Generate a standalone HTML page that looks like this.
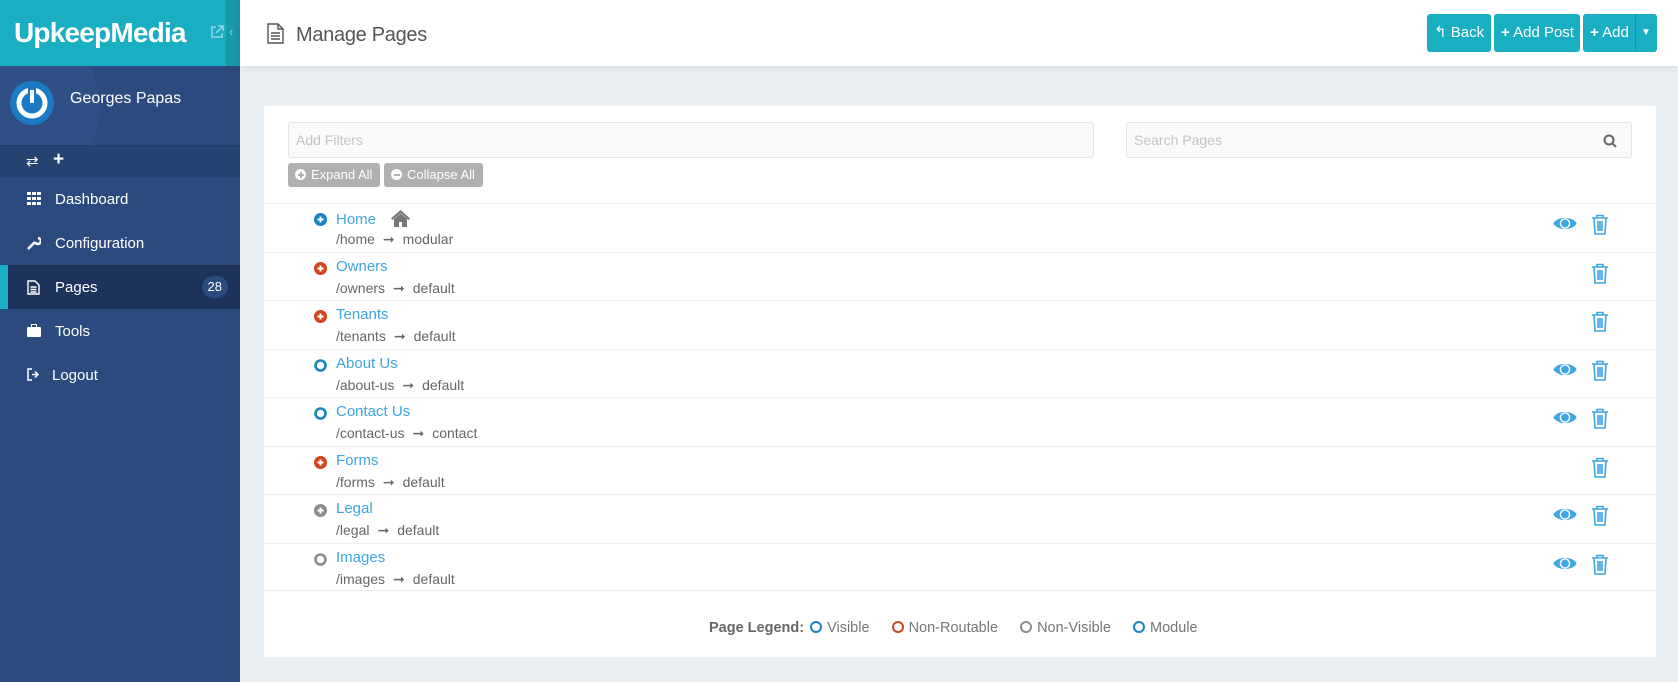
<!DOCTYPE html>
<html><head><meta charset="utf-8"><style>
*{box-sizing:border-box;margin:0;padding:0}
body{width:1678px;height:682px;overflow:hidden;background:#eaeff3;font-family:"Liberation Sans",Arial,sans-serif;position:relative}
.sb{position:absolute;left:0;top:0;width:240px;height:682px;background:#2c4a7e}
.logo{position:absolute;left:0;top:0;width:240px;height:66px;background:#1aaec2}
.logo .strip{position:absolute;right:0;top:0;width:14px;height:66px;background:#1798ab}
.logo b{position:absolute;left:14px;top:17px;color:#fff;font-size:28px;letter-spacing:-0.8px}
.prof{position:absolute;top:66px;left:0;width:240px;height:80px;overflow:hidden;border-bottom:1px solid #24406e}
.prof .halo{position:absolute;left:-60px;top:-40px;width:160px;height:160px;border-radius:50%;background:#2f4f85}
.av{position:absolute;left:10px;top:15px;width:44px;height:44px;border-radius:50%;background:#1a7ac4}
.prof .nm{position:absolute;left:70px;top:24px;color:#fff;font-size:16px}
.tb{position:absolute;top:146px;left:0;width:240px;height:31px;background:#264372;color:#fff}
.mi{position:absolute;left:0;width:240px;height:44px;color:#fff;font-size:15px;line-height:46px;padding-left:55px}
.mi.act{background:#1d335c;border-left:8px solid #1aaec2;padding-left:47px}
.mi svg{position:absolute;left:27px;top:15px}
.mi.act svg{left:19px}
.badge{position:absolute;right:12px;top:11px;background:#2c4a7e;border-radius:11px;font-size:13px;line-height:22px;padding:0 6px}
.hd{position:absolute;left:240px;top:0;width:1438px;height:66px;background:#fff;box-shadow:0 2px 8px rgba(0,0,0,.08)}
.hd h1{position:absolute;left:56px;top:24px;font-weight:normal;font-size:20px;color:#555;letter-spacing:-0.3px}
.btn{position:absolute;top:14px;height:38px;background:#1aaec2;border-radius:3px;color:#fff;font-size:15px;line-height:38px;padding-left:7px}
.panel{position:absolute;left:264px;top:106px;width:1392px;height:551px;background:#fff}
.inp{position:absolute;top:16px;height:36px;border:1px solid #e4e4e4;border-radius:3px;background:#fafafa;color:#c4c4c4;font-size:14px;line-height:34px;padding-left:7px}
.gb{position:absolute;top:57px;height:24px;background:#b0b0b0;border-radius:3px;color:#fff;font-size:13px;line-height:24px;padding-left:7px}
.gb i{display:inline-block;width:11px;height:11px;border-radius:50%;background:#fff;vertical-align:-1px;margin-right:5px;position:relative}
.gb i:after{content:"";position:absolute;left:2.5px;top:4.5px;width:6px;height:2px;background:#b0b0b0}
.gb i.p:before{content:"";position:absolute;left:4.5px;top:2.5px;width:2px;height:6px;background:#b0b0b0}
.row{position:absolute;left:0;width:1392px;height:48.5px;border-top:1px solid #eceef0}
.row .t{position:absolute;left:72px;top:5px;color:#3ea6e2;font-size:15px}
.row .s{position:absolute;left:72px;top:27px;color:#666;font-size:14px;word-spacing:0}
.row .s i{font-style:normal;margin:0 8px}
.row .ic{position:absolute;left:50px;top:9px}
.eye{position:absolute;left:1288px;top:11px}
.tr{position:absolute;left:1327px;top:10px}
.leg{position:absolute;top:514px;left:445px;font-size:14.5px;color:#777}
.leg b{color:#666}
.leg span{display:inline-block;width:12px;height:12px;border-radius:50%;border:2.5px solid;vertical-align:-1px;margin:0 5px 0 8px}
</style></head><body>
<div class="sb">
 <div class="logo"><b>UpkeepMedia</b><div class="strip"></div>
  <svg style="position:absolute;left:210px;top:25px" width="14" height="14" viewBox="0 0 14 14" fill="none" stroke="#8fdbe6" stroke-width="1.5"><path d="M6 2H2v10h10V8M8 1h5v5M13 1L6 8"/></svg>
  <span style="position:absolute;left:229px;top:24px;color:#8fdbe6;font-size:13px">‹</span></div>
 <div class="prof"><div class="halo"></div><div class="av">
  <svg width="44" height="44" viewBox="0 0 44 44"><circle cx="22" cy="22" r="13" fill="none" stroke="#fff" stroke-width="5"/><rect x="18" y="6" width="8" height="17" fill="#1a7ac4"/><rect x="20" y="9" width="4" height="13" fill="#fff"/></svg></div>
  <div class="nm">Georges Papas</div></div>
 <div class="tb"><span style="position:absolute;left:26px;top:6px;font-size:15px">⇄</span><span style="position:absolute;left:53px;top:3px;font-size:19px;font-weight:bold">+</span></div>
 <div class="mi" style="top:177px"><svg width="14" height="13"><g fill="#fff"><rect x="0" y="0" width="4" height="3"/><rect x="5" y="0" width="4" height="3"/><rect x="10" y="0" width="4" height="3"/><rect x="0" y="5" width="4" height="3"/><rect x="5" y="5" width="4" height="3"/><rect x="10" y="5" width="4" height="3"/><rect x="0" y="10" width="4" height="3"/><rect x="5" y="10" width="4" height="3"/><rect x="10" y="10" width="4" height="3"/></g></svg>Dashboard</div>
 <div class="mi" style="top:221px"><svg width="14" height="14"><path d="M1 13l7-7M8 6a3 3 0 1 0 3-4" stroke="#fff" stroke-width="2.5" fill="none"/></svg>Configuration</div>
 <div class="mi act" style="top:265px"><svg width="13" height="15" viewBox="0 0 13 15" fill="none" stroke="#fff" stroke-width="1.4"><path d="M1 1h7l4 4v9H1z M3.5 7h6M3.5 9.5h6M3.5 12h6"/></svg>Pages<span class="badge">28</span></div>
 <div class="mi" style="top:309px"><svg width="14" height="13"><rect x="0" y="3" width="14" height="10" rx="1" fill="#fff"/><rect x="4.5" y="0.5" width="5" height="3" fill="none" stroke="#fff"/></svg>Tools</div>
 <div class="mi" style="top:353px;padding-left:52px"><svg width="14" height="13" viewBox="0 0 14 13" fill="none" stroke="#fff" stroke-width="1.5"><path d="M5 1H1v11h4"/><path d="M5 6.5h5M8 3.5l3 3-3 3" /></svg>Logout</div>
</div>
<div class="hd">
 <svg style="position:absolute;left:27px;top:23px" width="17" height="21" viewBox="0 0 17 21" fill="none" stroke="#555" stroke-width="1.4"><path d="M1 1h10l5 5v14H1z M11 1v5h5 M4 10h9M4 13h9M4 16h9"/></svg>
 <h1>Manage Pages</h1>
 <div class="btn" style="left:1187px;width:64px">↰ Back</div>
 <div class="btn" style="left:1254px;width:86px"><b>+</b> Add Post</div>
 <div class="btn" style="left:1343px;width:74px"><b>+</b> Add<span style="position:absolute;left:52px;top:0;width:1px;height:38px;background:#1593a5"></span><span style="position:absolute;left:58px;font-size:10px">▼</span></div>
</div>
<div class="panel">
 <div class="inp" style="left:24px;width:806px">Add Filters</div>
 <div class="inp" style="left:862px;width:506px">Search Pages
  <svg style="position:absolute;right:14px;top:11px" width="14" height="14" fill="none" stroke="#666" stroke-width="2"><circle cx="6" cy="6" r="4.5"/><path d="M9.5 9.5l3.5 3.5"/></svg></div>
 <div class="gb" style="left:24px;width:92px"><i class="p"></i>Expand All</div>
 <div class="gb" style="left:120px;width:99px"><i></i>Collapse All</div>

 <div class="row" style="top:97px"><svg class="ic" width="13" height="13"><circle cx="6.5" cy="6.5" r="6.5" fill="#1783c0"/><path d="M3.5 6.5h6M6.5 3.5v6" stroke="#fff" stroke-width="2"/></svg><div class="t">Home <svg style="margin-left:10px;vertical-align:-3px" width="21" height="18" viewBox="0 0 21 18"><path d="M10.5 1L1 9.5l1.5 1.5 8-7 8 7L20 9.5z M4 10v8h5v-5h3v5h5v-8l-6.5-5.5z" fill="#777"/></svg></div><div class="s">/home<i>➞</i>modular</div>
  <svg class="eye" width="26" height="17" viewBox="0 0 24 16"><path d="M1 8C5 1 19 1 23 8 19 15 5 15 1 8z" fill="#3ea6e2"/><circle cx="12" cy="8" r="5" fill="#fff"/><circle cx="12" cy="8" r="3.6" fill="#3ea6e2"/></svg>
  <svg class="tr" width="18" height="21" viewBox="0 0 18 21" fill="none" stroke="#3ea6e2" stroke-width="1.6"><path d="M1 4h16M6 4V1.5h6V4M3 4l1 16h10l1-16M7 7v10M9 7v10M11 7v10"/></svg></div>
 <div class="row" style="top:145.5px"><svg class="ic" width="13" height="13"><circle cx="6.5" cy="6.5" r="6.5" fill="#d1441f"/><path d="M3.5 6.5h6M6.5 3.5v6" stroke="#fff" stroke-width="2"/></svg><div class="t">Owners</div><div class="s">/owners<i>➞</i>default</div>
  <svg class="tr" width="18" height="21" viewBox="0 0 18 21" fill="none" stroke="#3ea6e2" stroke-width="1.6"><path d="M1 4h16M6 4V1.5h6V4M3 4l1 16h10l1-16M7 7v10M9 7v10M11 7v10"/></svg></div>
 <div class="row" style="top:194px"><svg class="ic" width="13" height="13"><circle cx="6.5" cy="6.5" r="6.5" fill="#d1441f"/><path d="M3.5 6.5h6M6.5 3.5v6" stroke="#fff" stroke-width="2"/></svg><div class="t">Tenants</div><div class="s">/tenants<i>➞</i>default</div>
  <svg class="tr" width="18" height="21" viewBox="0 0 18 21" fill="none" stroke="#3ea6e2" stroke-width="1.6"><path d="M1 4h16M6 4V1.5h6V4M3 4l1 16h10l1-16M7 7v10M9 7v10M11 7v10"/></svg></div>
 <div class="row" style="top:242.5px"><svg class="ic" width="13" height="13"><circle cx="6.5" cy="6.5" r="5" fill="none" stroke="#1783c0" stroke-width="2.6"/></svg><div class="t">About Us</div><div class="s">/about-us<i>➞</i>default</div>
  <svg class="eye" width="26" height="17" viewBox="0 0 24 16"><path d="M1 8C5 1 19 1 23 8 19 15 5 15 1 8z" fill="#3ea6e2"/><circle cx="12" cy="8" r="5" fill="#fff"/><circle cx="12" cy="8" r="3.6" fill="#3ea6e2"/></svg>
  <svg class="tr" width="18" height="21" viewBox="0 0 18 21" fill="none" stroke="#3ea6e2" stroke-width="1.6"><path d="M1 4h16M6 4V1.5h6V4M3 4l1 16h10l1-16M7 7v10M9 7v10M11 7v10"/></svg></div>
 <div class="row" style="top:291px"><svg class="ic" width="13" height="13"><circle cx="6.5" cy="6.5" r="5" fill="none" stroke="#1783c0" stroke-width="2.6"/></svg><div class="t">Contact Us</div><div class="s">/contact-us<i>➞</i>contact</div>
  <svg class="eye" width="26" height="17" viewBox="0 0 24 16"><path d="M1 8C5 1 19 1 23 8 19 15 5 15 1 8z" fill="#3ea6e2"/><circle cx="12" cy="8" r="5" fill="#fff"/><circle cx="12" cy="8" r="3.6" fill="#3ea6e2"/></svg>
  <svg class="tr" width="18" height="21" viewBox="0 0 18 21" fill="none" stroke="#3ea6e2" stroke-width="1.6"><path d="M1 4h16M6 4V1.5h6V4M3 4l1 16h10l1-16M7 7v10M9 7v10M11 7v10"/></svg></div>
 <div class="row" style="top:339.5px"><svg class="ic" width="13" height="13"><circle cx="6.5" cy="6.5" r="6.5" fill="#d1441f"/><path d="M3.5 6.5h6M6.5 3.5v6" stroke="#fff" stroke-width="2"/></svg><div class="t">Forms</div><div class="s">/forms<i>➞</i>default</div>
  <svg class="tr" width="18" height="21" viewBox="0 0 18 21" fill="none" stroke="#3ea6e2" stroke-width="1.6"><path d="M1 4h16M6 4V1.5h6V4M3 4l1 16h10l1-16M7 7v10M9 7v10M11 7v10"/></svg></div>
 <div class="row" style="top:388px"><svg class="ic" width="13" height="13"><circle cx="6.5" cy="6.5" r="6.5" fill="#8c8c8c"/><path d="M3.5 6.5h6M6.5 3.5v6" stroke="#fff" stroke-width="2"/></svg><div class="t">Legal</div><div class="s">/legal<i>➞</i>default</div>
  <svg class="eye" width="26" height="17" viewBox="0 0 24 16"><path d="M1 8C5 1 19 1 23 8 19 15 5 15 1 8z" fill="#3ea6e2"/><circle cx="12" cy="8" r="5" fill="#fff"/><circle cx="12" cy="8" r="3.6" fill="#3ea6e2"/></svg>
  <svg class="tr" width="18" height="21" viewBox="0 0 18 21" fill="none" stroke="#3ea6e2" stroke-width="1.6"><path d="M1 4h16M6 4V1.5h6V4M3 4l1 16h10l1-16M7 7v10M9 7v10M11 7v10"/></svg></div>
 <div class="row" style="top:436.5px;border-bottom:1px solid #eceef0"><svg class="ic" width="13" height="13"><circle cx="6.5" cy="6.5" r="5" fill="none" stroke="#8c8c8c" stroke-width="2.6"/></svg><div class="t">Images</div><div class="s">/images<i>➞</i>default</div>
  <svg class="eye" width="26" height="17" viewBox="0 0 24 16"><path d="M1 8C5 1 19 1 23 8 19 15 5 15 1 8z" fill="#3ea6e2"/><circle cx="12" cy="8" r="5" fill="#fff"/><circle cx="12" cy="8" r="3.6" fill="#3ea6e2"/></svg>
  <svg class="tr" width="18" height="21" viewBox="0 0 18 21" fill="none" stroke="#3ea6e2" stroke-width="1.6"><path d="M1 4h16M6 4V1.5h6V4M3 4l1 16h10l1-16M7 7v10M9 7v10M11 7v10"/></svg></div>

 <div class="leg"><b>Page Legend:</b><span style="border-color:#1783c0;margin-left:6px"></span>Visible <span style="border-color:#d1441f;margin-left:18px"></span>Non-Routable <span style="border-color:#8c8c8c;margin-left:18px"></span>Non-Visible <span style="border-color:#1783c0;margin-left:18px"></span>Module</div>
</div>
</body></html>
